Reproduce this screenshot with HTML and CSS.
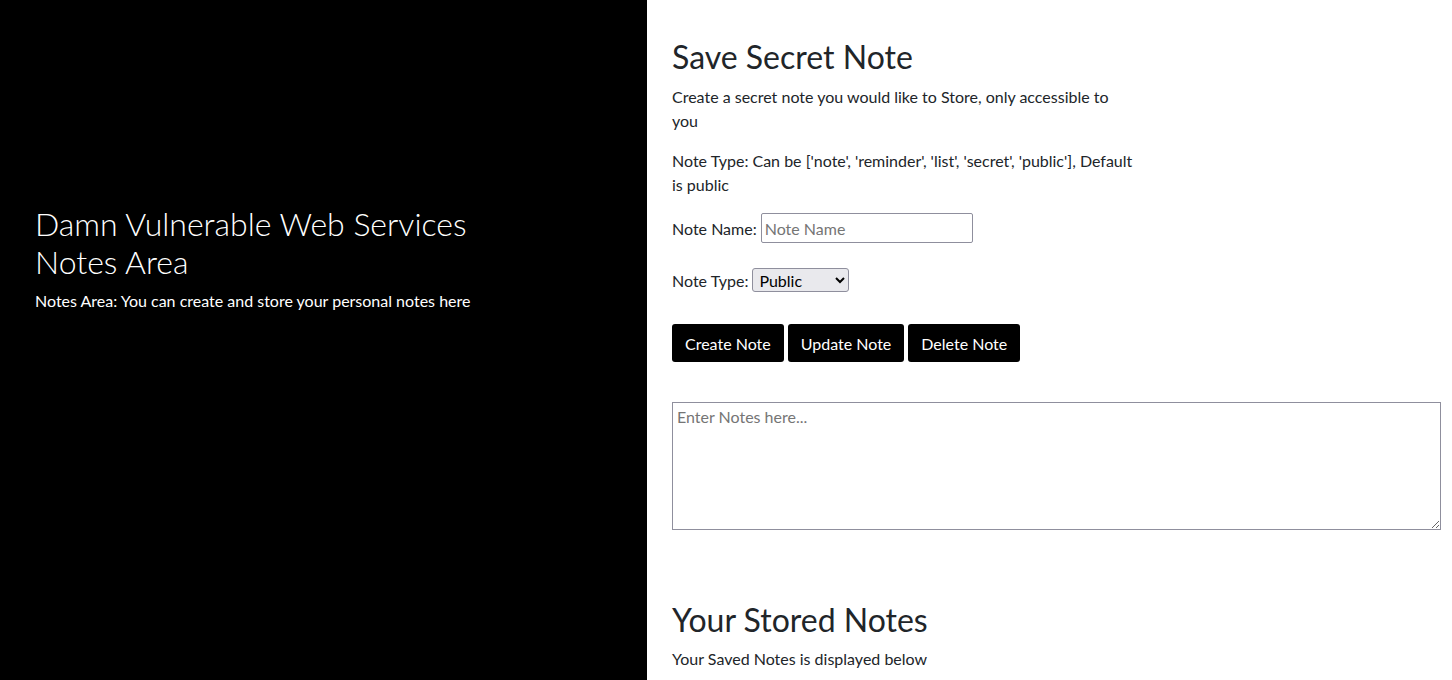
FILE: index.html
```html
<!DOCTYPE html>
<html>
<head>
<meta charset="utf-8">
<title>Notes Area</title>
<link rel="stylesheet" href="styles.css">
</head>
<body>
<div class="page">
  <aside class="side">
    <div class="side-inner">
      <h1 class="side-title">Damn Vulnerable Web Services<br>Notes Area</h1>
      <p class="side-sub">Notes Area: You can create and store your personal notes here</p>
    </div>
  </aside>
  <main class="main">
    <h1 class="heading">Save Secret Note</h1>
    <p class="para">Create a secret note you would like to Store, only accessible to you</p>
    <p class="para">Note Type: Can be ['note', 'reminder', 'list', 'secret', 'public'], Default is public</p>
    <div class="row row-name">
      <label class="label" for="nname">Note Name:</label>
      <input class="text-input" id="nname" type="text" placeholder="Note Name">
    </div>
    <div class="row row-type">
      <label class="label" for="ntype">Note Type:</label>
      <select class="select" id="ntype">
        <option>Public</option>
        <option>Note</option>
        <option>Reminder</option>
        <option>List</option>
        <option>Secret</option>
      </select>
    </div>
    <div class="buttons">
      <button class="btn">Create Note</button>
      <button class="btn">Update Note</button>
      <button class="btn">Delete Note</button>
    </div>
    <textarea class="notes" placeholder="Enter Notes here..."></textarea>
    <h2 class="heading stored">Your Stored Notes</h2>
    <p class="small">Your Saved Notes is displayed below</p>
  </main>
</div>
</body>
</html>
```

FILE: styles.css
```css
* { box-sizing: border-box; }
html, body {
  margin: 0;
  padding: 0;
  height: 100%;
}
body {
  font-family: Lato, "Open Sans", sans-serif;
  font-size: 16px;
  color: #212529;
  background: #fff;
  overflow: hidden;
}
.page {
  display: flex;
  height: 680px;
}
.side {
  width: 647px;
  flex: none;
  background: #000;
  color: #fff;
  display: flex;
  align-items: center;
  padding: 0 35px 162px;
}
.side-title {
  font-weight: 300;
  font-size: 32px;
  line-height: 38px;
  margin: 0 0 8px;
}
.side-sub {
  margin: 0;
  font-size: 16px;
  line-height: 24px;
}
.main {
  flex: 1;
  padding: 38px 11px 0 25px;
}
.heading {
  font-size: 32px;
  font-weight: 400;
  line-height: 38px;
  margin: 0 0 9px;
}
.para {
  margin: 0 0 16px;
  max-width: 463px;
  line-height: 24px;
}
.row {
  display: flex;
  align-items: center;
  gap: 4px;
}
.row-name { height: 30px; margin: 1px 0 25px; }
.row-type { height: 24px; margin-bottom: 32px; }
.text-input {
  width: 212px;
  height: 30px;
  border: 1px solid #8f8f9d;
  border-radius: 2px;
  padding: 1px 3px;
  font: inherit;
  font-size: 16px;
  color: #212529;
}
.text-input::placeholder { color: #757575; }
.select {
  width: 97px;
  height: 24px;
  font: inherit;
  font-size: 16px;
  color: #000;
  background: #e9e9ed;
  border: 1px solid #8f8f9d;
  border-radius: 3px;
  padding: 0 2px;
}
.buttons {
  display: flex;
  gap: 4px;
  margin-bottom: 40px;
}
.btn {
  height: 38px;
  padding: 0 13px;
  background: #000;
  color: #fff;
  border: none;
  border-radius: 3px;
  font: inherit;
  font-size: 16px;
}
.notes {
  display: block;
  width: 769px;
  height: 128px;
  border: 1px solid #8f8f9d;
  border-radius: 0;
  padding: 4px 4px;
  font-family: Lato, sans-serif;
  font-size: 16px;
  margin-bottom: 71px;
}
.notes::placeholder { color: #757575; }
.stored { margin-bottom: 8px; }
.small {
  margin: 0;
  line-height: 24px;
}
```
